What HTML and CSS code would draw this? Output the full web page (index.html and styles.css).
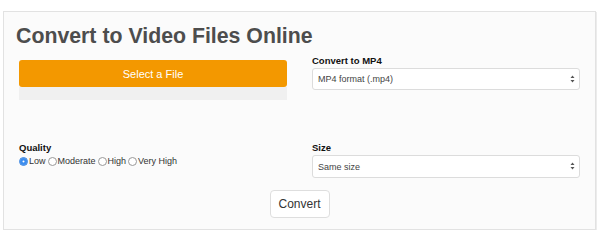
FILE: index.html
```html
<!DOCTYPE html>
<html lang="en">
<head>
  <meta charset="UTF-8" />
  <meta name="viewport" content="width=device-width, initial-scale=1.0" />
  <title>Convert to Video Files Online</title>
  <link rel="stylesheet" href="styles.css">
</head>
<body>

  <div class="panel">
    <h1>Convert to Video Files Online</h1>

    <div class="row row-top">
      <div class="col">
        <button class="file-btn" type="button">Select a File</button>
        <div class="file-track"></div>
      </div>
      <div class="col">
        <label class="field-label" for="format">Convert to MP4</label>
        <div class="select-wrap">
          <select id="format">
            <option>MP4 format (.mp4)</option>
          </select>
          <svg class="arrows" width="5" height="8" viewBox="0 0 5 8">
            <path d="M0.5 3 L2.5 0.5 L4.5 3 Z M0.5 5 L2.5 7.5 L4.5 5 Z" fill="#555" />
          </svg>
        </div>
      </div>
    </div>

    <div class="row row-bottom">
      <div class="col">
        <div class="field-label">Quality</div>
        <div class="radios">
          <label><input type="radio" name="quality" checked>Low</label>
          <label><input type="radio" name="quality">Moderate</label>
          <label><input type="radio" name="quality">High</label>
          <label><input type="radio" name="quality">Very High</label>
        </div>
      </div>
      <div class="col">
        <label class="field-label" for="size">Size</label>
        <div class="select-wrap">
          <select id="size">
            <option>Same size</option>
          </select>
          <svg class="arrows" width="5" height="8" viewBox="0 0 5 8">
            <path d="M0.5 3 L2.5 0.5 L4.5 3 Z M0.5 5 L2.5 7.5 L4.5 5 Z" fill="#555" />
          </svg>
        </div>
      </div>
    </div>

    <div class="actions">
      <button class="convert-btn" type="button">Convert</button>
    </div>
  </div>

</body>
</html>
```

FILE: styles.css
```css
body {
  font-family: 'Liberation Sans', Arial, sans-serif;
  background-color: #fff;
  margin: 0;
  padding: 11px 4px 0 3px;
}

.panel {
  background-color: #fbfbfb;
  border: 1px solid #e2e2e2;
  box-shadow: 1px 1px 0 #ececec;
  height: 219px;
  box-sizing: border-box;
  padding: 0 15px 0 15px;
}

h1 {
  font-size: 21.3px;
  line-height: 26px;
  font-weight: bold;
  color: #4d4d4d;
  margin: 11px 0 0 -3px;
}

.row {
  display: grid;
  grid-template-columns: 268px 268px;
  column-gap: 25px;
}

.row-top {
  margin-top: 6px;
}

.row-bottom {
  margin-top: 42px;
}

.field-label {
  display: block;
  font-size: 9.5px;
  line-height: 12px;
  font-weight: bold;
  color: #111;
  margin-bottom: 1px;
}

.file-btn {
  display: block;
  width: 100%;
  height: 27px;
  margin-top: 5px;
  border: none;
  border-radius: 3px;
  background-color: #f39800;
  color: #fff;
  font-family: inherit;
  font-size: 11px;
}

.file-track {
  height: 13px;
  background-color: #f0f0f0;
}

.select-wrap {
  position: relative;
}

select {
  appearance: none;
  -webkit-appearance: none;
  width: 100%;
  height: 22px;
  padding: 0 5px;
  border: 1px solid #dcdcdc;
  border-radius: 3px;
  background-color: #fff;
  font-family: inherit;
  font-size: 9px;
  color: #444;
}

#size {
  height: 23px;
}

.arrows {
  position: absolute;
  right: 5px;
  top: 7px;
}

.radios {
  display: flex;
  align-items: center;
  font-size: 9px;
  color: #333;
  margin-top: 2px;
}

.radios label {
  display: flex;
  align-items: center;
  margin-right: 2px;
}

.radios input {
  appearance: none;
  -webkit-appearance: none;
  width: 9px;
  height: 9px;
  margin: 0 1px 0 0;
  border: 1px solid #999;
  border-radius: 50%;
  background-color: #fff;
}

.radios input:checked {
  border-color: #2f7fe0;
  background-color: #fff;
  box-shadow: inset 0 0 0 2.5px #3b8def;
}

.actions {
  display: flex;
  justify-content: center;
  margin-top: 12px;
}

.convert-btn {
  width: 60px;
  height: 28px;
  border: 1px solid #dedede;
  border-radius: 4px;
  background-color: #fff;
  font-family: inherit;
  font-size: 12px;
  color: #333;
}
```
